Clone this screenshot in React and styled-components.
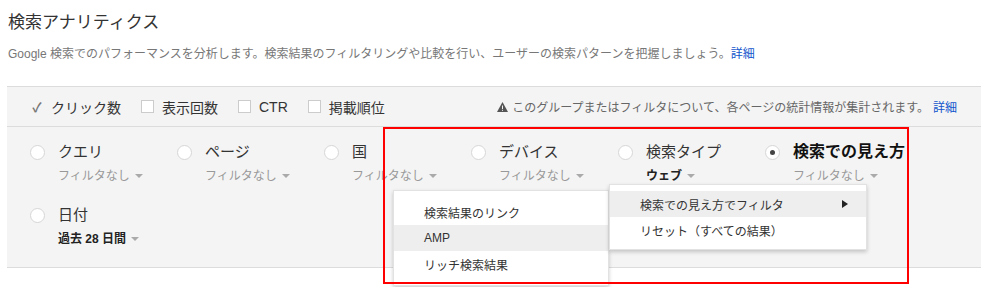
import React from 'react';
import styled, { createGlobalStyle } from 'styled-components';

const GlobalStyle = createGlobalStyle`
  body {
    margin: 0;
    background: #fff;
    font-family: "Liberation Sans", "Noto Sans CJK JP", sans-serif;
    color: #333;
  }
`;

const Page = styled.div`
  position: relative;
  width: 993px;
  height: 287px;
  overflow: hidden;
`;

const Title = styled.h1`
  margin: 0;
  padding: 11px 0 0 8px;
  font-size: 17px;
  line-height: 24px;
  font-weight: 400;
  color: #333;
`;

const Desc = styled.p`
  margin: 8px 0 0 8px;
  font-size: 12px;
  line-height: 22px;
  color: #777;
`;

const Link = styled.a`
  color: #1155cc;
  text-decoration: none;
`;

const Panel = styled.div`
  margin: 21px 0 0 7px;
  width: 974px;
  background: #f4f4f4;
  border-top: 1px solid #dcdcdc;
  border-bottom: 1px solid #dcdcdc;
`;

const Toolbar = styled.div`
  display: flex;
  align-items: center;
  height: 39px;
  padding-left: 24px;
  border-bottom: 1px solid #dcdcdc;
`;

const Metric = styled.label`
  display: flex;
  align-items: center;
  gap: 8px;
  margin-right: 20px;
  font-size: 14px;
  color: #333;
`;

const Check = styled.span`
  width: 12px;
  text-align: center;
  color: #777;
  font-size: 13px;
  font-weight: 700;
`;

const Box = styled.span`
  width: 11px;
  height: 11px;
  border: 1px solid #ccc;
  background: #fff;
`;

const Note = styled.div`
  margin-left: auto;
  margin-right: 24px;
  display: flex;
  align-items: center;
  gap: 4px;
  font-size: 12px;
  color: #666;
`;

const Dims = styled.div`
  display: grid;
  grid-template-columns: repeat(6, 147px);
  row-gap: 19px;
  padding: 15px 0 18px 23px;
`;

const Dim = styled.div`
  display: grid;
  grid-template-columns: 21px auto;
  column-gap: 7px;
  row-gap: 4px;
  align-items: center;
`;

const Radio = styled.span`
  width: 13px;
  height: 13px;
  border-radius: 50%;
  border: 1px solid #d6d6d6;
  background: #fff;
  display: flex;
  align-items: center;
  justify-content: center;
  &::after {
    content: '';
    width: 5px;
    height: 5px;
    border-radius: 50%;
    background: ${p => (p.$on ? '#444' : 'transparent')};
  }
`;

const DimName = styled.span`
  line-height: 20px;
  color: ${p => (p.$on ? '#111' : '#333')};
  font-weight: ${p => (p.$on ? 600 : 400)};
  font-size: ${p => (p.$on ? '16px' : '15px')};
`;

const Sub = styled.span`
  grid-column: 2;
  display: flex;
  align-items: center;
  gap: 5px;
  font-size: 12px;
  line-height: 20px;
  color: ${p => (p.$bold ? '#222' : '#999')};
  font-weight: ${p => (p.$bold ? 700 : 400)};
`;

const Caret = styled.span`
  width: 0;
  height: 0;
  border-left: 4px solid transparent;
  border-right: 4px solid transparent;
  border-top: 4px solid #aaa;
`;

const Menu = styled.div`
  position: absolute;
  background: #fff;
  border: 1px solid #e2e2e2;
  box-shadow: 0 2px 4px rgba(0, 0, 0, 0.2);
  padding: ${p => p.$pad};
  font-size: 12px;
  color: #333;
`;

const Item = styled.div`
  display: flex;
  align-items: center;
  justify-content: space-between;
  height: 26px;
  padding: 0 18px 0 30px;
  background: ${p => (p.$hl ? '#eee' : 'transparent')};
`;

const Arrow = styled.span`
  width: 0;
  height: 0;
  border-top: 4px solid transparent;
  border-bottom: 4px solid transparent;
  border-left: 6px solid #222;
`;

const Highlight = styled.div`
  position: absolute;
  left: 383px;
  top: 127px;
  width: 522px;
  height: 153px;
  border: 2px solid #ff0000;
  pointer-events: none;
`;

const WarnIcon = () => (
  <svg width="11" height="10" viewBox="0 0 11 10">
    <path d="M5.5 0 L11 10 L0 10 Z" fill="#555" />
    <rect x="5" y="3.5" width="1" height="3.5" fill="#f4f4f4" />
    <rect x="5" y="7.8" width="1" height="1" fill="#f4f4f4" />
  </svg>
);

const dims = [
  { name: 'クエリ', sub: 'フィルタなし' },
  { name: 'ページ', sub: 'フィルタなし' },
  { name: '国', sub: 'フィルタなし' },
  { name: 'デバイス', sub: 'フィルタなし' },
  { name: '検索タイプ', sub: 'ウェブ', bold: true },
  { name: '検索での見え方', sub: 'フィルタなし', on: true },
  { name: '日付', sub: '過去 28 日間', bold: true },
];

export default function App() {
  return (
    <Page>
      <GlobalStyle />
      <Title>検索アナリティクス</Title>
      <Desc>
        Google 検索でのパフォーマンスを分析します。検索結果のフィルタリングや比較を行い、ユーザーの検索パターンを把握しましょう。
        <Link href="#">詳細</Link>
      </Desc>
      <Panel>
        <Toolbar>
          <Metric><Check>✓</Check>クリック数</Metric>
          <Metric><Box />表示回数</Metric>
          <Metric><Box />CTR</Metric>
          <Metric><Box />掲載順位</Metric>
          <Note>
            <WarnIcon />
            このグループまたはフィルタについて、各ページの統計情報が集計されます。
            <Link href="#">詳細</Link>
          </Note>
        </Toolbar>
        <Dims>
          {dims.map(d => (
            <Dim key={d.name}>
              <Radio $on={d.on} />
              <DimName $on={d.on}>{d.name}</DimName>
              <Sub $bold={d.bold}>{d.sub}<Caret /></Sub>
            </Dim>
          ))}
        </Dims>
      </Panel>
      <Menu style={{ left: 393, top: 190, width: 214 }} $pad="8px 0">
        <Item>検索結果のリンク</Item>
        <Item $hl>AMP</Item>
        <Item>リッチ検索結果</Item>
      </Menu>
      <Menu style={{ left: 609, top: 184, width: 256 }} $pad="6px 0 6px">
        <Item $hl>検索での見え方でフィルタ<Arrow /></Item>
        <Item>リセット（すべての結果）</Item>
      </Menu>
      <Highlight />
    </Page>
  );
}
